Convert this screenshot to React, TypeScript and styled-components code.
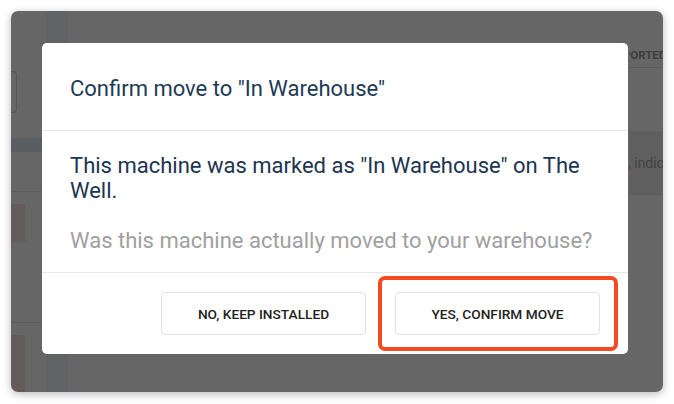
import React from 'react'
import { styled, createGlobalStyle } from 'styled-components'

const GlobalStyle = createGlobalStyle`
  html, body {
    margin: 0;
    padding: 0;
    background: #ffffff;
    font-family: Roboto, "Liberation Sans", sans-serif;
  }
`

const App = () => {
  return (
    <>
      <GlobalStyle />
      <Page>
        <Screen>
          <Backdrop>
            <LeftPane>
              <SearchBox />
              <Band />
              <Row h={43} />
              <RowBlock h={40} />
              <Row h={86} />
              <RowBlock h={60} />
            </LeftPane>
            <SideStripe />
            <Main>
              <Column />
              <LastColumn>
                <HeadCell>REPORTED</HeadCell>
                <Notice>
                  <NoticeText>, indicates</NoticeText>
                </Notice>
              </LastColumn>
            </Main>
          </Backdrop>

          <Overlay>
            <Modal>
              <Header>
                <Title>Confirm move to "In Warehouse"</Title>
              </Header>
              <Body>
                <Message>This machine was marked as "In Warehouse" on The Well.</Message>
                <Question>Was this machine actually moved to your warehouse?</Question>
              </Body>
              <Footer>
                <Button>No, keep installed</Button>
                <Highlight>
                  <Button>Yes, confirm move</Button>
                </Highlight>
              </Footer>
            </Modal>
          </Overlay>
        </Screen>
      </Page>
    </>
  )
}

export default App

const Page = styled.div`
  padding: 11px 11px 12px 11px;
  width: 674px;
  height: 404px;
  box-sizing: border-box;
`

const Screen = styled.div`
  position: relative;
  width: 652px;
  height: 381px;
  border-radius: 7px;
  overflow: hidden;
  background: #fff;
  box-shadow: 0 2px 9px rgba(0, 0, 0, 0.28);
`

const Backdrop = styled.div`
  display: flex;
  height: 100%;
`

const LeftPane = styled.div`
  width: 35px;
  display: flex;
  flex-direction: column;
  padding-top: 60px;
`

const SearchBox = styled.div`
  height: 44px;
  width: 6px;
  border: 1px solid #d8d8d8;
  border-left: none;
  border-radius: 0 4px 4px 0;
  box-sizing: border-box;
`

const Band = styled.div`
  margin-top: 25px;
  height: 15px;
  background: #e2e8f2;
`

const Row = styled.div<{ h: number }>`
  height: ${({ h }) => h}px;
  border-bottom: 1px solid #eaeaea;
  box-sizing: border-box;
`

const RowBlock = styled.div<{ h: number }>`
  margin-top: 12px;
  width: 14px;
  height: ${({ h }) => h}px;
  background: #fbe4e4;
`

const SideStripe = styled.div`
  width: 22px;
  background: #f1f4f8;
`

const Main = styled.div`
  flex: 1;
  display: flex;
`

const Column = styled.div`
  flex: 1;
`

const LastColumn = styled.div`
  width: 34px;
  overflow: hidden;
  display: flex;
  flex-direction: column;
`

const HeadCell = styled.div`
  margin-top: 33px;
  height: 23px;
  border-bottom: 1px solid #e4e4e4;
  font-size: 11.5px;
  font-weight: 700;
  line-height: 23px;
  color: #9a9a9a;
  white-space: nowrap;
  text-indent: -20px;
`

const Notice = styled.div`
  margin-top: 63px;
  height: 64px;
  background: #eeeeee;
  display: flex;
  align-items: center;
`

const NoticeText = styled.div`
  font-size: 14px;
  color: #a5a5a5;
  white-space: nowrap;
  margin-left: -1px;
`

const Overlay = styled.div`
  position: absolute;
  inset: 0;
  background: rgba(0, 0, 0, 0.6);
  padding: 32px 35px 0 31px;
`

const Modal = styled.div`
  width: 586px;
  background: #fff;
  border-radius: 5px;
  display: flex;
  flex-direction: column;
`

const Header = styled.div`
  height: 88px;
  display: flex;
  align-items: center;
  padding: 3px 28px 0;
  box-sizing: border-box;
  border-bottom: 1px solid #e6e6e6;
`

const Title = styled.h2`
  margin: 0;
  font-size: 22px;
  font-weight: 400;
  color: #213a55;
`

const Body = styled.div`
  padding: 22px 28px 19px;
  border-bottom: 1px solid #e6e6e6;
  display: flex;
  flex-direction: column;
  gap: 25px;
`

const Message = styled.p`
  margin: 0;
  font-size: 22px;
  line-height: 25px;
  color: #1c3450;
`

const Question = styled.p`
  margin: 0;
  font-size: 22px;
  line-height: 25px;
  color: #a0a0a0;
`

const Footer = styled.div`
  display: flex;
  justify-content: flex-end;
  gap: 29px;
  padding: 19px 28px 19px;
`

const Highlight = styled.div`
  position: relative;
  display: flex;

  &::after {
    content: '';
    position: absolute;
    top: -16px;
    bottom: -16px;
    left: -17px;
    right: -18px;
    border: 4px solid #f24a22;
    border-radius: 7px;
    pointer-events: none;
  }
`

const Button = styled.button`
  width: 205px;
  height: 43px;
  background: #fff;
  border: 1px solid #e2e2e2;
  border-radius: 4px;
  font-family: Roboto, "Liberation Sans", sans-serif;
  font-size: 13.7px;
  font-weight: 500;
  text-transform: uppercase;
  color: #222;
  cursor: pointer;
`
